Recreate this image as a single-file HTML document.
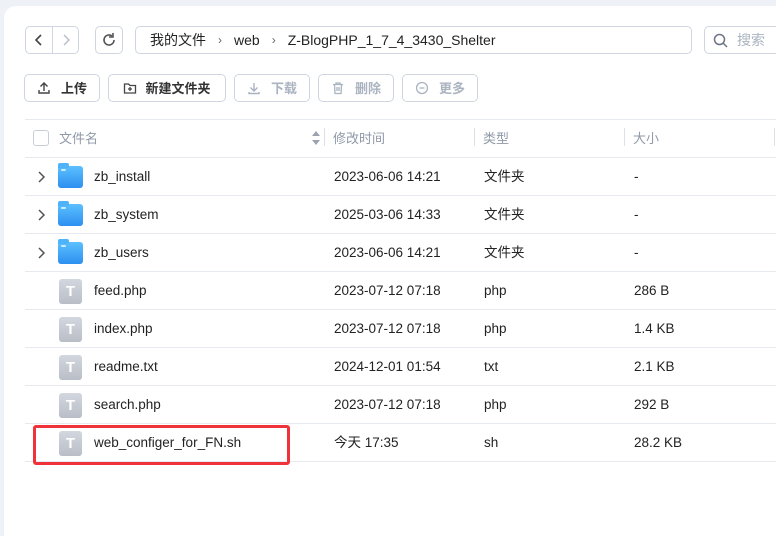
<!DOCTYPE html>
<html><head><meta charset="utf-8"><style>
*{box-sizing:border-box;margin:0;padding:0}
body{width:776px;height:529px;background:#eef2f7;font-family:"Liberation Sans","Noto Sans CJK SC",sans-serif;font-size:13px;color:#222;overflow:hidden;position:relative}
.panel{position:absolute;left:4px;top:6px;width:780px;height:530px;background:#fff;border-radius:12px 0 0 0}
.abs{position:absolute}
.btn{position:absolute;border:1px solid #cfd6e0;border-radius:5px;background:#fff;display:flex;align-items:center;justify-content:center;font-size:13px;font-weight:bold;color:#333;line-height:1}
.btn.dis{color:#aab3c0;font-weight:bold}
.hline{position:absolute;left:25px;width:760px;height:1px;background:#e6e9ee}
.hdr{position:absolute;top:120px;height:37px;line-height:37px;color:#8f99a8;font-size:13px}
.vd{position:absolute;top:128px;width:1px;height:18px;background:#dde1e7}
.row{position:absolute;left:0;width:776px;height:38px}
.row span{position:absolute;top:0;height:38px;line-height:38px;font-size:13.5px}
.fold{position:absolute;left:58px;top:8px;width:25px;height:22px;border-radius:3px;background:linear-gradient(#5cc0ff,#2d8ff0)}
.fold:before{content:"";position:absolute;left:0;top:-3px;width:11px;height:5px;background:#4fb3fb;border-radius:2px 2px 0 0}
.fold:after{content:"";position:absolute;left:3px;top:3px;width:5px;height:2px;background:#c9ecff;border-radius:1px}
.doc{position:absolute;left:59px;top:7px;width:23px;height:25px;border-radius:3px;background:linear-gradient(#d3d7de,#b8bec7);color:#fff;font-weight:bold;font-size:15px;text-align:center;line-height:25px}
.chev{position:absolute;left:36px;top:13px}
</style></head><body>
<div class="panel"></div>
<div class="btn" style="left:25px;top:26px;width:54px;height:28px"></div>
<div class="abs" style="left:52px;top:27px;width:1px;height:26px;background:#cfd6e0"></div>
<svg class="abs" style="left:33px;top:34px" width="12" height="12"><path d="M8 1L3 6l5 5" stroke="#444" stroke-width="1.6" fill="none"/></svg>
<svg class="abs" style="left:60px;top:34px" width="12" height="12"><path d="M4 1l5 5-5 5" stroke="#b5bcc6" stroke-width="1.4" fill="none"/></svg>
<div class="btn" style="left:95px;top:26px;width:28px;height:28px"></div>
<svg class="abs" style="left:101px;top:32px" width="16" height="16"><path d="M13 8a5 5 0 1 1-2-4" stroke="#555" stroke-width="1.6" fill="none"/><path d="M12 1v4H8" stroke="#555" stroke-width="1.6" fill="none"/></svg>
<div class="btn" style="left:135px;top:26px;width:557px;height:28px;justify-content:flex-start;font-weight:normal;color:#222;padding-left:14px;font-size:14px">我的文件<span style="margin:0 12px;color:#666;font-size:12px">›</span>web<span style="margin:0 12px;color:#666;font-size:12px">›</span>Z-BlogPHP_1_7_4_3430_Shelter</div>
<div class="btn" style="left:704px;top:26px;width:90px;height:28px;justify-content:flex-start;font-weight:normal;color:#aab3c0;padding-left:32px;font-size:14px">搜索</div>
<svg class="abs" style="left:713px;top:33px" width="15" height="15"><circle cx="6.5" cy="6.5" r="5" stroke="#6b7584" stroke-width="1.5" fill="none"/><path d="M10 10l4 4" stroke="#6b7584" stroke-width="1.5"/></svg>
<div class="btn" style="left:24px;top:74px;width:76px;height:28px"><svg width="14" height="14" style="margin-right:10px"><path d="M7 10V2M3.5 5.5L7 2l3.5 3.5M2 9v3h10V9" stroke="#444" stroke-width="1.4" fill="none"/></svg>上传</div>
<div class="btn" style="left:108px;top:74px;width:118px;height:28px"><svg width="14" height="14" style="margin-right:8px"><path d="M1.5 3h4l1.5 1.5h5.5v7.5h-11z" stroke="#444" stroke-width="1.3" fill="none"/><path d="M7 6v4M5 8h4" stroke="#444" stroke-width="1.3"/></svg>新建文件夹</div>
<div class="btn dis" style="left:234px;top:74px;width:76px;height:28px"><svg width="14" height="14" style="margin-right:10px"><path d="M7 2v8M3.5 6.5L7 10l3.5-3.5M2 11v1.5h10V11" stroke="#aab3c0" stroke-width="1.4" fill="none"/></svg>下载</div>
<div class="btn dis" style="left:318px;top:74px;width:76px;height:28px"><svg width="14" height="14" style="margin-right:10px"><path d="M2 3.5h10M5 3.5V2h4v1.5M3.5 3.5l.5 9h6l.5-9M6 6v4M8 6v4" stroke="#aab3c0" stroke-width="1.3" fill="none"/></svg>删除</div>
<div class="btn dis" style="left:402px;top:74px;width:76px;height:28px"><svg width="14" height="14" style="margin-right:10px"><circle cx="7" cy="7" r="5.5" stroke="#aab3c0" stroke-width="1.3" fill="none"/><path d="M4.5 7h5" stroke="#aab3c0" stroke-width="1.3"/></svg>更多</div>
<div class="hline" style="top:119px"></div>
<div class="abs" style="left:33px;top:130px;width:16px;height:16px;border:1px solid #c8ced8;border-radius:3px"></div>
<div class="hdr" style="left:59px">文件名</div>
<svg class="abs" style="left:311px;top:130px" width="10" height="16"><path d="M1 6l4-5 4 5z" fill="#9aa3b2"/><path d="M1 10l4 5 4-5z" fill="#9aa3b2"/></svg>
<div class="vd" style="left:324px"></div><div class="hdr" style="left:333px">修改时间</div>
<div class="vd" style="left:474px"></div><div class="hdr" style="left:483px">类型</div>
<div class="vd" style="left:624px"></div><div class="hdr" style="left:633px">大小</div>
<div class="vd" style="left:774px"></div>
<div class="hline" style="top:157px"></div>

<div class="row" style="top:158px"><svg class="chev" width="10" height="12"><path d="M3 1l5 5-5 5" stroke="#555" stroke-width="1.5" fill="none"/></svg><div class="fold"></div><span style="left:94px">zb_install</span><span style="left:334px">2023-06-06 14:21</span><span style="left:484px">文件夹</span><span style="left:634px">-</span></div>
<div class="hline" style="top:195px"></div>
<div class="row" style="top:196px"><svg class="chev" width="10" height="12"><path d="M3 1l5 5-5 5" stroke="#555" stroke-width="1.5" fill="none"/></svg><div class="fold"></div><span style="left:94px">zb_system</span><span style="left:334px">2025-03-06 14:33</span><span style="left:484px">文件夹</span><span style="left:634px">-</span></div>
<div class="hline" style="top:233px"></div>
<div class="row" style="top:234px"><svg class="chev" width="10" height="12"><path d="M3 1l5 5-5 5" stroke="#555" stroke-width="1.5" fill="none"/></svg><div class="fold"></div><span style="left:94px">zb_users</span><span style="left:334px">2023-06-06 14:21</span><span style="left:484px">文件夹</span><span style="left:634px">-</span></div>
<div class="hline" style="top:271px"></div>
<div class="row" style="top:272px"><div class="doc">T</div><span style="left:94px">feed.php</span><span style="left:334px">2023-07-12 07:18</span><span style="left:484px">php</span><span style="left:634px">286 B</span></div>
<div class="hline" style="top:309px"></div>
<div class="row" style="top:310px"><div class="doc">T</div><span style="left:94px">index.php</span><span style="left:334px">2023-07-12 07:18</span><span style="left:484px">php</span><span style="left:634px">1.4 KB</span></div>
<div class="hline" style="top:347px"></div>
<div class="row" style="top:348px"><div class="doc">T</div><span style="left:94px">readme.txt</span><span style="left:334px">2024-12-01 01:54</span><span style="left:484px">txt</span><span style="left:634px">2.1 KB</span></div>
<div class="hline" style="top:385px"></div>
<div class="row" style="top:386px"><div class="doc">T</div><span style="left:94px">search.php</span><span style="left:334px">2023-07-12 07:18</span><span style="left:484px">php</span><span style="left:634px">292 B</span></div>
<div class="hline" style="top:423px"></div>
<div class="row" style="top:424px"><div class="doc">T</div><span style="left:94px">web_configer_for_FN.sh</span><span style="left:334px">今天 17:35</span><span style="left:484px">sh</span><span style="left:634px">28.2 KB</span></div>
<div class="hline" style="top:461px"></div>
<div class="abs" style="left:33px;top:425px;width:257px;height:40px;border:3px solid #f0333a;border-radius:3px"></div>
</body></html>
